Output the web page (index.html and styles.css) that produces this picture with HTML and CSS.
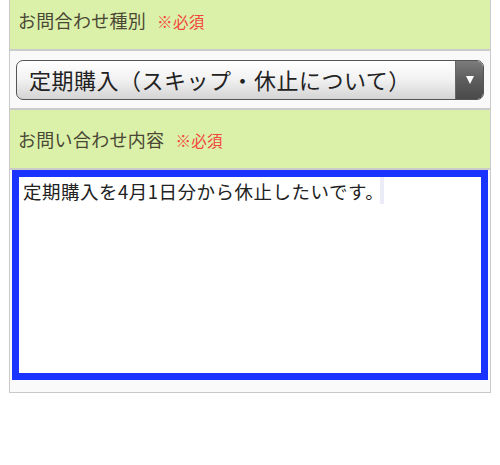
FILE: index.html
```html
<!DOCTYPE html>
<html lang="ja">
<head>
<meta charset="utf-8">
<title>お問い合わせ</title>
<link rel="stylesheet" href="styles.css">
</head>
<body>
<div class="form">
  <div class="label-row first">
    <span class="label">お問合わせ種別</span><span class="req">※必須</span>
  </div>
  <div class="select-row">
    <div class="select">
      <span class="select-text">定期購入（スキップ・休止について）</span>
      <span class="select-btn"><span class="tri"></span></span>
    </div>
  </div>
  <div class="label-row">
    <span class="label">お問い合わせ内容</span><span class="req">※必須</span>
  </div>
  <div class="textarea-row">
    <div class="textarea">定期購入を4月1日分から休止したいです。<span class="caret"></span></div>
  </div>
</div>
</body>
</html>
```
FILE: styles.css
```css
body {
  margin: 0;
  background: #fff;
  font-family: "Noto Sans CJK JP", "Noto Sans", sans-serif;
}
.form {
  margin-left: 9px;
  width: 482px;
  box-sizing: border-box;
  border: 1px solid #c9c9c9;
  border-top: 0;
  background: #fafafa;
}
.label-row {
  display: flex;
  align-items: baseline;
  gap: 11px;
  background: #dbf1a9;
  padding: 17px 8px 16px;
  line-height: 24px;
  border-bottom: 2px solid #cbcbcb;
}
.label-row.first {
  padding-top: 8px;
}
.label {
  font-size: 18px;
  letter-spacing: 0.3px;
  color: #4a4735;
}
.req {
  font-size: 15.5px;
  letter-spacing: 0.3px;
  color: #f2473d;
}
.select-row {
  padding: 9px 6px 8px;
  background: #f9f9f9;
  border-bottom: 2px solid #cbcbcb;
}
.select {
  display: flex;
  height: 40px;
  box-sizing: border-box;
  border: 1px solid #555;
  border-radius: 7px;
  background: linear-gradient(#ffffff, #f3f3f3 45%, #d4d4d4);
  overflow: hidden;
}
.select-text {
  flex: 1;
  padding-left: 12px;
  font-size: 22px;
  letter-spacing: 0.5px;
  line-height: 36px;
  color: #222;
  white-space: nowrap;
}
.select-btn {
  width: 27px;
  display: flex;
  align-items: center;
  justify-content: center;
  background: linear-gradient(#7c7c7c, #5d5d5d 50%, #4a4a4a);
  border-left: 1px solid #666;
}
.tri {
  width: 0;
  height: 0;
  border-left: 4px solid transparent;
  border-right: 4px solid transparent;
  border-top: 8px solid #fff;
}
.textarea-row {
  padding: 0 2px 12px;
}
.textarea {
  height: 210px;
  box-sizing: border-box;
  border: 7px solid #1a33ff;
  background: #fff;
  padding: 0 4px;
  font-size: 18.5px;
  letter-spacing: 0.5px;
  line-height: 28px;
  color: #222;
}
.caret {
  display: inline-block;
  width: 4px;
  height: 27px;
  margin-left: -4px;
  vertical-align: top;
  background: #ececf9;
}
```
